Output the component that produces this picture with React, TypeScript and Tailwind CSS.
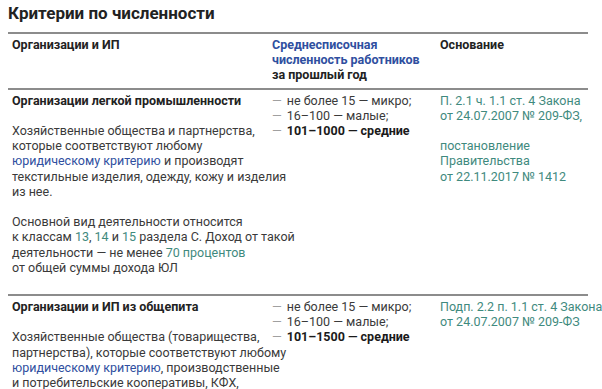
import React from 'react';

const green = 'text-[#3f8a7e]';
const blue = 'text-[#2f4fa0]';

const Sizes: React.FC<{ mid: string }> = ({ mid }) => (
  <ul>
    <li className="flex gap-[5px]"><span className="text-[#a0a0a0]">—</span><span>не более 15 — микро;</span></li>
    <li className="flex gap-[5px]"><span className="text-[#a0a0a0]">—</span><span>16–100 — малые;</span></li>
    <li className="flex gap-[5px]"><span className="text-[#a0a0a0]">—</span><span className="font-bold text-[#1a1a1a]">{mid} — средние</span></li>
  </ul>
);

export default function App() {
  return (
    <div className="bg-white w-[602px] h-[389px] overflow-hidden pl-[8px] pt-[3px] font-['Roboto',sans-serif] text-[#3a3a3a]">
      <h2 className="text-[17px] leading-[20px] font-bold text-[#222]">Критерии по численности</h2>

      <div className="mt-[9px] w-[580px] border-t-2 border-[#8c8c8c] text-[12.5px] leading-[15.2px] whitespace-nowrap">
        {/* header */}
        <div className="grid grid-cols-[260px_168px_152px] pl-[4px] pt-[3px] pb-[5px] font-bold text-[#222]">
          <div>Организации и ИП</div>
          <div>
            <span className={blue}>Среднесписочная<br />численность работников</span>
            <br />за прошлый год
          </div>
          <div>Основание</div>
        </div>

        {/* row 1 */}
        <div className="grid grid-cols-[260px_168px_152px] pl-[4px] pt-[3px] pb-[19px] border-t-2 border-[#8c8c8c]">
          <div>
            <div className="font-bold text-[#222]">Организации легкой промышленности</div>
            <p className="mt-[15.2px]">
              Хозяйственные общества и партнерства,<br />которые соответствуют любому<br />
              <span className={blue}>юридическому критерию</span> и производят<br />текстильные изделия, одежду, кожу и изделия<br />из нее.
            </p>
            <p className="mt-[15.2px]">
              Основной вид деятельности относится<br />к классам <span className={green}>13</span>,{' '}
              <span className={green}>14</span> и <span className={green}>15</span> раздела С. Доход от такой<br />деятельности — не менее{' '}
              <span className={green}>70 процентов</span><br />от общей суммы дохода ЮЛ
            </p>
          </div>
          <Sizes mid="101–1000" />
          <div className={green}>
            <p>П. 2.1 ч. 1.1 ст. 4 Закона<br />от 24.07.2007 № 209-ФЗ,</p>
            <p className="mt-[15.2px]">постановление<br />Правительства<br />от 22.11.2017 № 1412</p>
          </div>
        </div>

        {/* row 2 */}
        <div className="grid grid-cols-[260px_168px_152px] pl-[4px] pt-[3px] pb-[19px] border-t-2 border-[#8c8c8c]">
          <div>
            <div className="font-bold text-[#222]">Организации и ИП из общепита</div>
            <p className="mt-[15.2px]">
              Хозяйственные общества (товарищества,<br />партнерства), которые соответствуют любому<br />
              <span className={blue}>юридическому критерию</span>, производственные<br />и потребительские кооперативы, КФХ,<br />ИП
            </p>
          </div>
          <Sizes mid="101–1500" />
          <div className={green}>
            <p>Подп. 2.2 п. 1.1 ст. 4 Закона<br />от 24.07.2007 № 209-ФЗ</p>
          </div>
        </div>
      </div>
    </div>
  );
}
